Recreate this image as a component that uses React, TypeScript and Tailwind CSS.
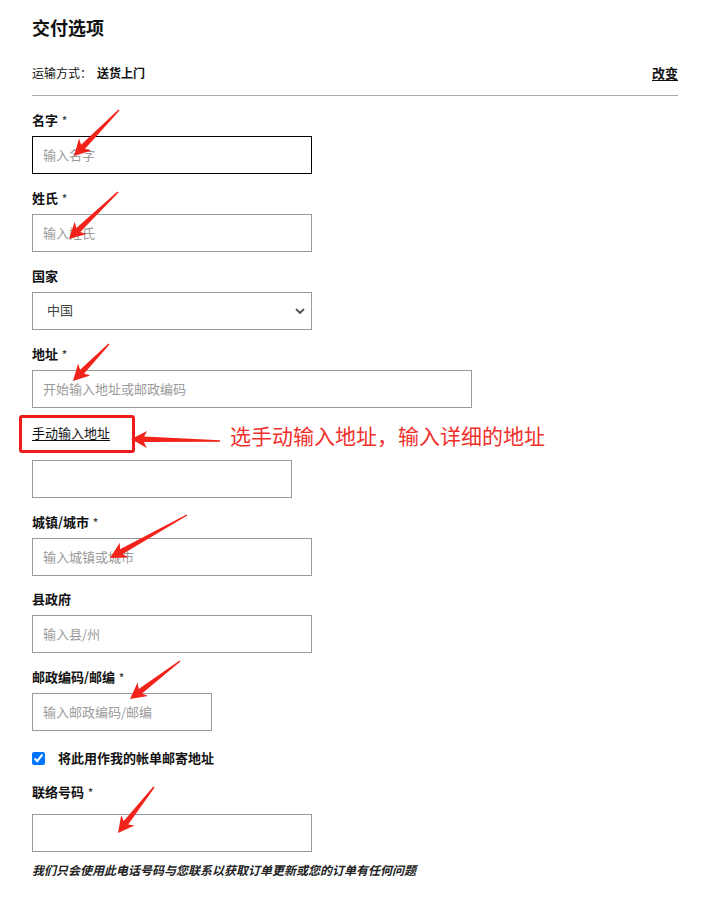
import React from "react";

const FONT = '"Noto Sans CJK SC", "Noto Sans", "Liberation Sans", sans-serif';

function arrowPoints(x1: number, y1: number, x2: number, y2: number) {
  const dx = x2 - x1;
  const dy = y2 - y1;
  const L = Math.hypot(dx, dy);
  const ux = dx / L;
  const uy = dy / L;
  const nx = -uy;
  const ny = ux;
  const p = (t: number, s: number) => `${(x1 + ux * t + nx * s).toFixed(1)},${(y1 + uy * t + ny * s).toFixed(1)}`;
  return [
    p(0, 0.7),
    p(L - 13, 2.8),
    p(L - 16, 8.5),
    p(L, 0),
    p(L - 16, -8.5),
    p(L - 13, -2.8),
    p(0, -0.7),
  ].join(" ");
}

const arrows: [number, number, number, number][] = [
  [119, 110, 74, 156],
  [118, 192, 69, 239],
  [109, 344, 73, 381],
  [220, 441, 131, 439],
  [187, 515, 110, 558],
  [180, 661, 130, 699],
  [154, 787, 118, 833],
];

function Req() {
  return <span className="ml-[4px] text-[10px] align-top text-[#444]">*</span>;
}

function Label({ text, req }: { text: string; req?: boolean }) {
  return (
    <div className="h-[18px] text-[13px] leading-[18px] font-bold text-[#111]">
      {text}
      {req && <Req />}
    </div>
  );
}

function Input({ placeholder, width, focused }: { placeholder?: string; width: number; focused?: boolean }) {
  return (
    <input
      placeholder={placeholder}
      style={{ width }}
      className={`block h-[38px] px-[10px] pb-[2px] text-[13px] bg-white outline-none placeholder:text-[#9a9a9a] border ${
        focused ? "border-black" : "border-[#9b9b9b]"
      }`}
    />
  );
}

function Field({ label, req, placeholder, width = 280, focused, mt = "mt-[15px]" }: { label: string; req?: boolean; placeholder?: string; width?: number; focused?: boolean; mt?: string }) {
  return (
    <div className={mt}>
      <Label text={label} req={req} />
      <div className="mt-[7px]">
        <Input placeholder={placeholder} width={width} focused={focused} />
      </div>
    </div>
  );
}

export default function App() {
  return (
    <div className="relative bg-white w-[701px] min-h-[912px] pl-[32px] pt-[15px]" style={{ fontFamily: FONT }}>
      <div className="w-[646px]">
        <h1 className="h-[24px] text-[18px] leading-[24px] font-bold text-[#111]">交付选项</h1>
        <div className="mt-[26px] h-[16px] flex items-center justify-between text-[12px] leading-[16px] text-[#111]">
          <div className="flex items-center">
            <span>运输方式：</span>
            <span className="ml-[5px] font-bold">送货上门</span>
          </div>
          <span className="text-[13px] font-bold underline underline-offset-2">改变</span>
        </div>
        <div className="mt-[14px] h-px bg-[#aaaaaa]" />

        <Field label="名字" req placeholder="输入名字" focused />
        <Field label="姓氏" req placeholder="输入姓氏" />

        <div className="mt-[15px]">
          <Label text="国家" />
          <div className="mt-[7px] relative w-[280px] h-[38px] border border-[#9b9b9b] flex items-center pl-[14px] pb-[2px] text-[13px] text-[#444]">
            <span>中国</span>
            <svg className="absolute right-[6px] top-[15px]" width="10" height="7" viewBox="0 0 10 7" fill="none">
              <path d="M1.5 1.5 L5 5 L8.5 1.5" stroke="#555" strokeWidth="1.8" strokeLinecap="round" strokeLinejoin="round" />
            </svg>
          </div>
        </div>

        <Field label="地址" req placeholder="开始输入地址或邮政编码" width={440} />

        <div className="h-[52px] flex items-center pb-[2px]">
          <span className="text-[13px] leading-[18px] text-[#111] underline underline-offset-2">手动输入地址</span>
        </div>
        <Input width={260} />

        <Field label="城镇/城市" req placeholder="输入城镇或城市" />
        <Field label="县政府" placeholder="输入县/州" mt="mt-[14px]" />
        <Field label="邮政编码/邮编" req placeholder="输入邮政编码/邮编" width={180} />

        <div className="mt-[18px] h-[18px] flex items-center">
          <input type="checkbox" defaultChecked className="m-0 w-[13px] h-[13px]" />
          <span className="ml-[13px] text-[13px] leading-[18px] font-bold text-[#111]">将此用作我的帐单邮寄地址</span>
        </div>

        <div className="mt-[16px]">
          <Label text="联络号码" req />
          <div className="mt-[13px]">
            <Input width={280} />
          </div>
        </div>

        <div className="mt-[9px] h-[18px] text-[12px] leading-[18px] font-bold italic text-[#222]">
          我们只会使用此电话号码与您联系以获取订单更新或您的订单有任何问题
        </div>
      </div>

      {/* annotations */}
      <div className="absolute left-[19px] top-[415px] w-[116px] h-[38px] border-[3px] border-[#ee1c1c] rounded-[3px] pointer-events-none" />
      <div className="absolute left-[230px] top-[421px] text-[21px] leading-[28px] text-[#f0302a] whitespace-nowrap">
        选手动输入地址，输入详细的地址
      </div>
      <svg className="absolute left-0 top-0 pointer-events-none" width="701" height="912">
        {arrows.map((a, i) => (
          <polygon key={i} points={arrowPoints(a[0], a[1], a[2], a[3])} fill="#f2231b" />
        ))}
      </svg>
    </div>
  );
}
